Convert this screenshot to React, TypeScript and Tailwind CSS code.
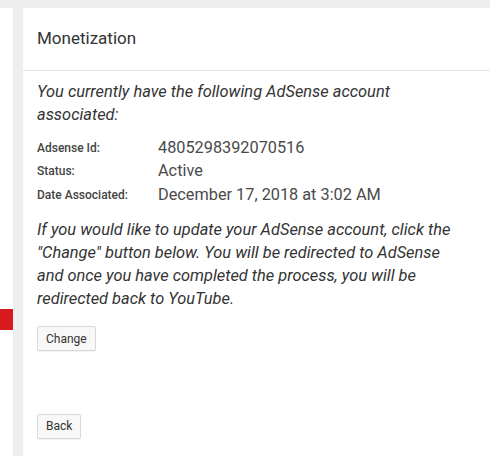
import React from 'react';

type Row = { label: string; value: string };

const rows: Row[] = [
  { label: 'Adsense Id:', value: '4805298392070516' },
  { label: 'Status:', value: 'Active' },
  { label: 'Date Associated:', value: 'December 17, 2018 at 3:02 AM' },
];

function Btn({ children }: { children: React.ReactNode }) {
  return (
    <button className="h-[25px] px-[8px] rounded-[2px] border border-[#d9d9d9] bg-[#f8f8f8] text-[12px] text-[#333] leading-none shadow-[0_1px_0_rgba(0,0,0,0.05)]">
      {children}
    </button>
  );
}

export default function App() {
  return (
    <div className="w-[490px] h-[456px] bg-white overflow-hidden font-['Roboto',sans-serif] text-[#333]">
      <div className="h-[8px] bg-[#eeeeee]" />
      <div className="flex h-[448px]">
        {/* sidebar edge */}
        <div className="w-[13px] bg-white">
          <div className="mt-[301px] h-[21px] bg-[#d71920]" />
        </div>
        <div className="w-[10px] bg-[#eeeeee]" />

        {/* card */}
        <div className="flex-1 flex flex-col">
          <div className="h-[63px] flex items-center px-[14px] border-b border-[#e3e3e3]">
            <h1 className="text-[17px] text-[#333]">Monetization</h1>
          </div>

          <div className="pl-[14px] pt-[9px] w-[439px]">
            <p className="italic text-[16.4px] leading-[23px] text-[#333]">
              You currently have the following AdSense account associated:
            </p>

            <div className="mt-[10px] flex flex-col">
              {rows.map(r => (
                <div key={r.label} className="flex items-center h-[23.5px]">
                  <span className="w-[121px] text-[12px] font-medium text-[#444]">{r.label}</span>
                  <span className="text-[16.3px] text-[#4a4a4a]">{r.value}</span>
                </div>
              ))}
            </div>

            <p className="mt-[11px] italic text-[16.4px] leading-[23px] text-[#333] w-[425px]">
              If you would like to update your AdSense account, click the "Change" button below. You will be
              redirected to AdSense and once you have completed the process, you will be redirected back to
              YouTube.
            </p>

            <div className="mt-[16px]">
              <Btn>Change</Btn>
            </div>
            <div className="mt-[62px]">
              <Btn>Back</Btn>
            </div>
          </div>
        </div>
      </div>
    </div>
  );
}
